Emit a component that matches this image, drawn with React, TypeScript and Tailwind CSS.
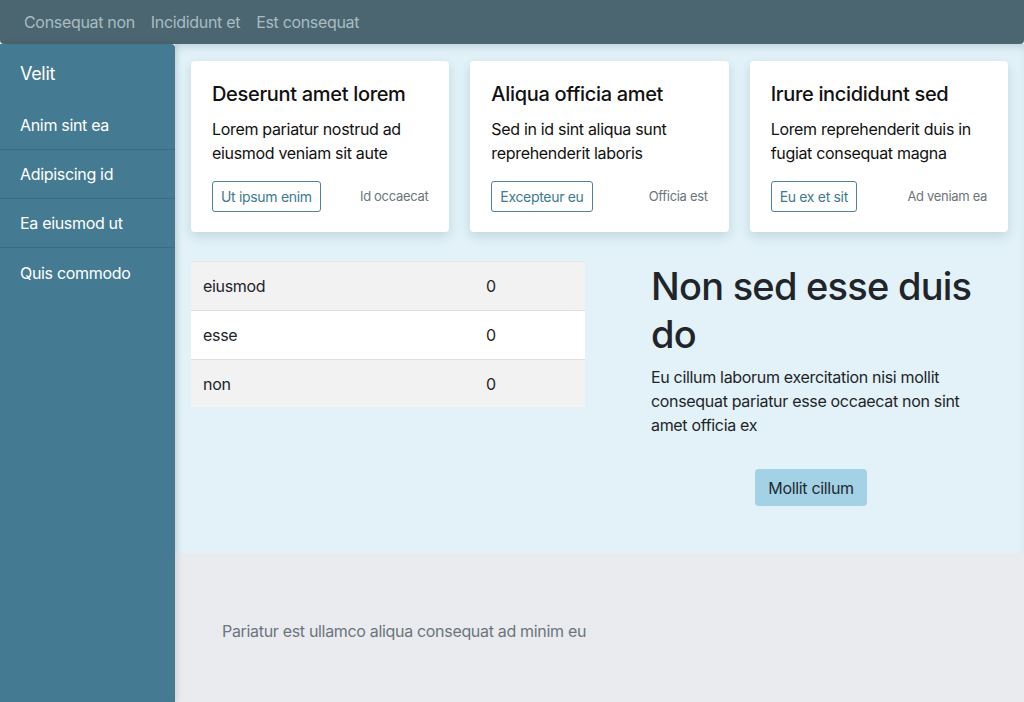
import React from "react";

const cards = [
  { title: "Deserunt amet lorem", body: "Lorem pariatur nostrud ad eiusmod veniam sit aute", btn: "Ut ipsum enim", meta: "Id occaecat" },
  { title: "Aliqua officia amet", body: "Sed in id sint aliqua sunt reprehenderit laboris", btn: "Excepteur eu", meta: "Officia est" },
  { title: "Irure incididunt sed", body: "Lorem reprehenderit duis in fugiat consequat magna", btn: "Eu ex et sit", meta: "Ad veniam ea" },
];

const rows = [
  { k: "eiusmod", v: "0", bg: "bg-[#f2f2f2]" },
  { k: "esse", v: "0", bg: "bg-white" },
  { k: "non", v: "0", bg: "bg-[#f2f2f2]" },
];

export default function App() {
  return (
    <div className="w-[1024px] h-[702px] overflow-hidden flex flex-col bg-white font-['Inter',sans-serif] tracking-[-0.02em]">
      <nav className="h-[44px] shrink-0 bg-[#4b6671] rounded-b-[4px] flex items-center px-4 text-[16px] text-[#a9bcc2]">
        <a className="px-2">Consequat non</a>
        <a className="px-2">Incididunt et</a>
        <a className="px-2">Est consequat</a>
      </nav>
      <div className="flex flex-1 min-h-0">
        <aside className="w-[175px] shrink-0 bg-[#457b92] rounded-tr-[4px] text-white shadow-[2px_0_6px_rgba(0,0,0,0.12)] relative z-10">
          <div className="px-5 pt-[17px] pb-[14px] text-[18px] leading-[26px]">Velit</div>
          {["Anim sint ea", "Adipiscing id", "Ea eiusmod ut", "Quis commodo"].map((t, i) => (
            <div key={t} className={`px-5 h-[49px] flex items-center text-[16px] ${i < 3 ? "border-b border-[#3d6c80]" : ""}`}>
              {t}
            </div>
          ))}
        </aside>
        <div className="flex-1 flex flex-col min-w-0">
          <main className="bg-[#e2f2f8] shadow-[inset_0_6px_10px_-4px_rgba(60,100,120,0.25)] px-4 pt-[17px] h-[509px] shrink-0">
            <div className="grid grid-cols-3 gap-[21px]">
              {cards.map((c) => (
                <div key={c.title} className="bg-white rounded-[4px] shadow-[0_4px_12px_rgba(60,100,120,0.2)] px-[21px] pt-[21px] pb-[20px]">
                  <h3 className="text-[20px] leading-[24px] font-medium text-[#111]">{c.title}</h3>
                  <p className="mt-[11px] text-[16px] leading-[24px] text-[#111]">{c.body}</p>
                  <div className="mt-[16px] flex items-center justify-between">
                    <button className="h-[31px] px-[8px] border border-[#4f8296] rounded-[3px] text-[14px] text-[#3c7a91]">{c.btn}</button>
                    <span className="text-[13px] text-[#6c757d]">{c.meta}</span>
                  </div>
                </div>
              ))}
            </div>
            <div className="grid grid-cols-2 gap-[29px] mt-[29px]">
              <div className="border-t border-[#e6e6e6] self-start">
                {rows.map((r, i) => (
                  <div key={r.k} className={`${r.bg} ${i < 2 ? "h-[49px] border-b border-[#dedede]" : "h-[47px]"} flex items-center text-[16px] text-[#212529]`}>
                    <div className="w-[295px] pl-[12px]">{r.k}</div>
                    <div>{r.v}</div>
                  </div>
                ))}
              </div>
              <div className="flex flex-col">
                <h1 className="pl-[37px] pr-[20px] pt-[1px] text-[38px] leading-[48px] font-medium text-[#212529] tracking-[-0.02em]">Non sed esse duis do</h1>
                <p className="pl-[37px] pr-[24px] mt-[7px] text-[16px] leading-[24px] text-[#212529]">
                  Eu cillum laborum exercitation nisi mollit consequat pariatur esse occaecat non sint amet officia ex
                </p>
                <div className="mt-[32px] flex justify-center">
                  <button className="h-[37px] px-[13px] bg-[#a3d2e7] rounded-[4px] text-[16px] text-[#1f2a30]">Mollit cillum</button>
                </div>
              </div>
            </div>
          </main>
          <footer className="flex-1 bg-[#e9ebee] flex items-center px-[47px]">
            <p className="text-[16px] text-[#6c757d] mt-[7px]">Pariatur est ullamco aliqua consequat ad minim eu</p>
          </footer>
        </div>
      </div>
    </div>
  );
}
